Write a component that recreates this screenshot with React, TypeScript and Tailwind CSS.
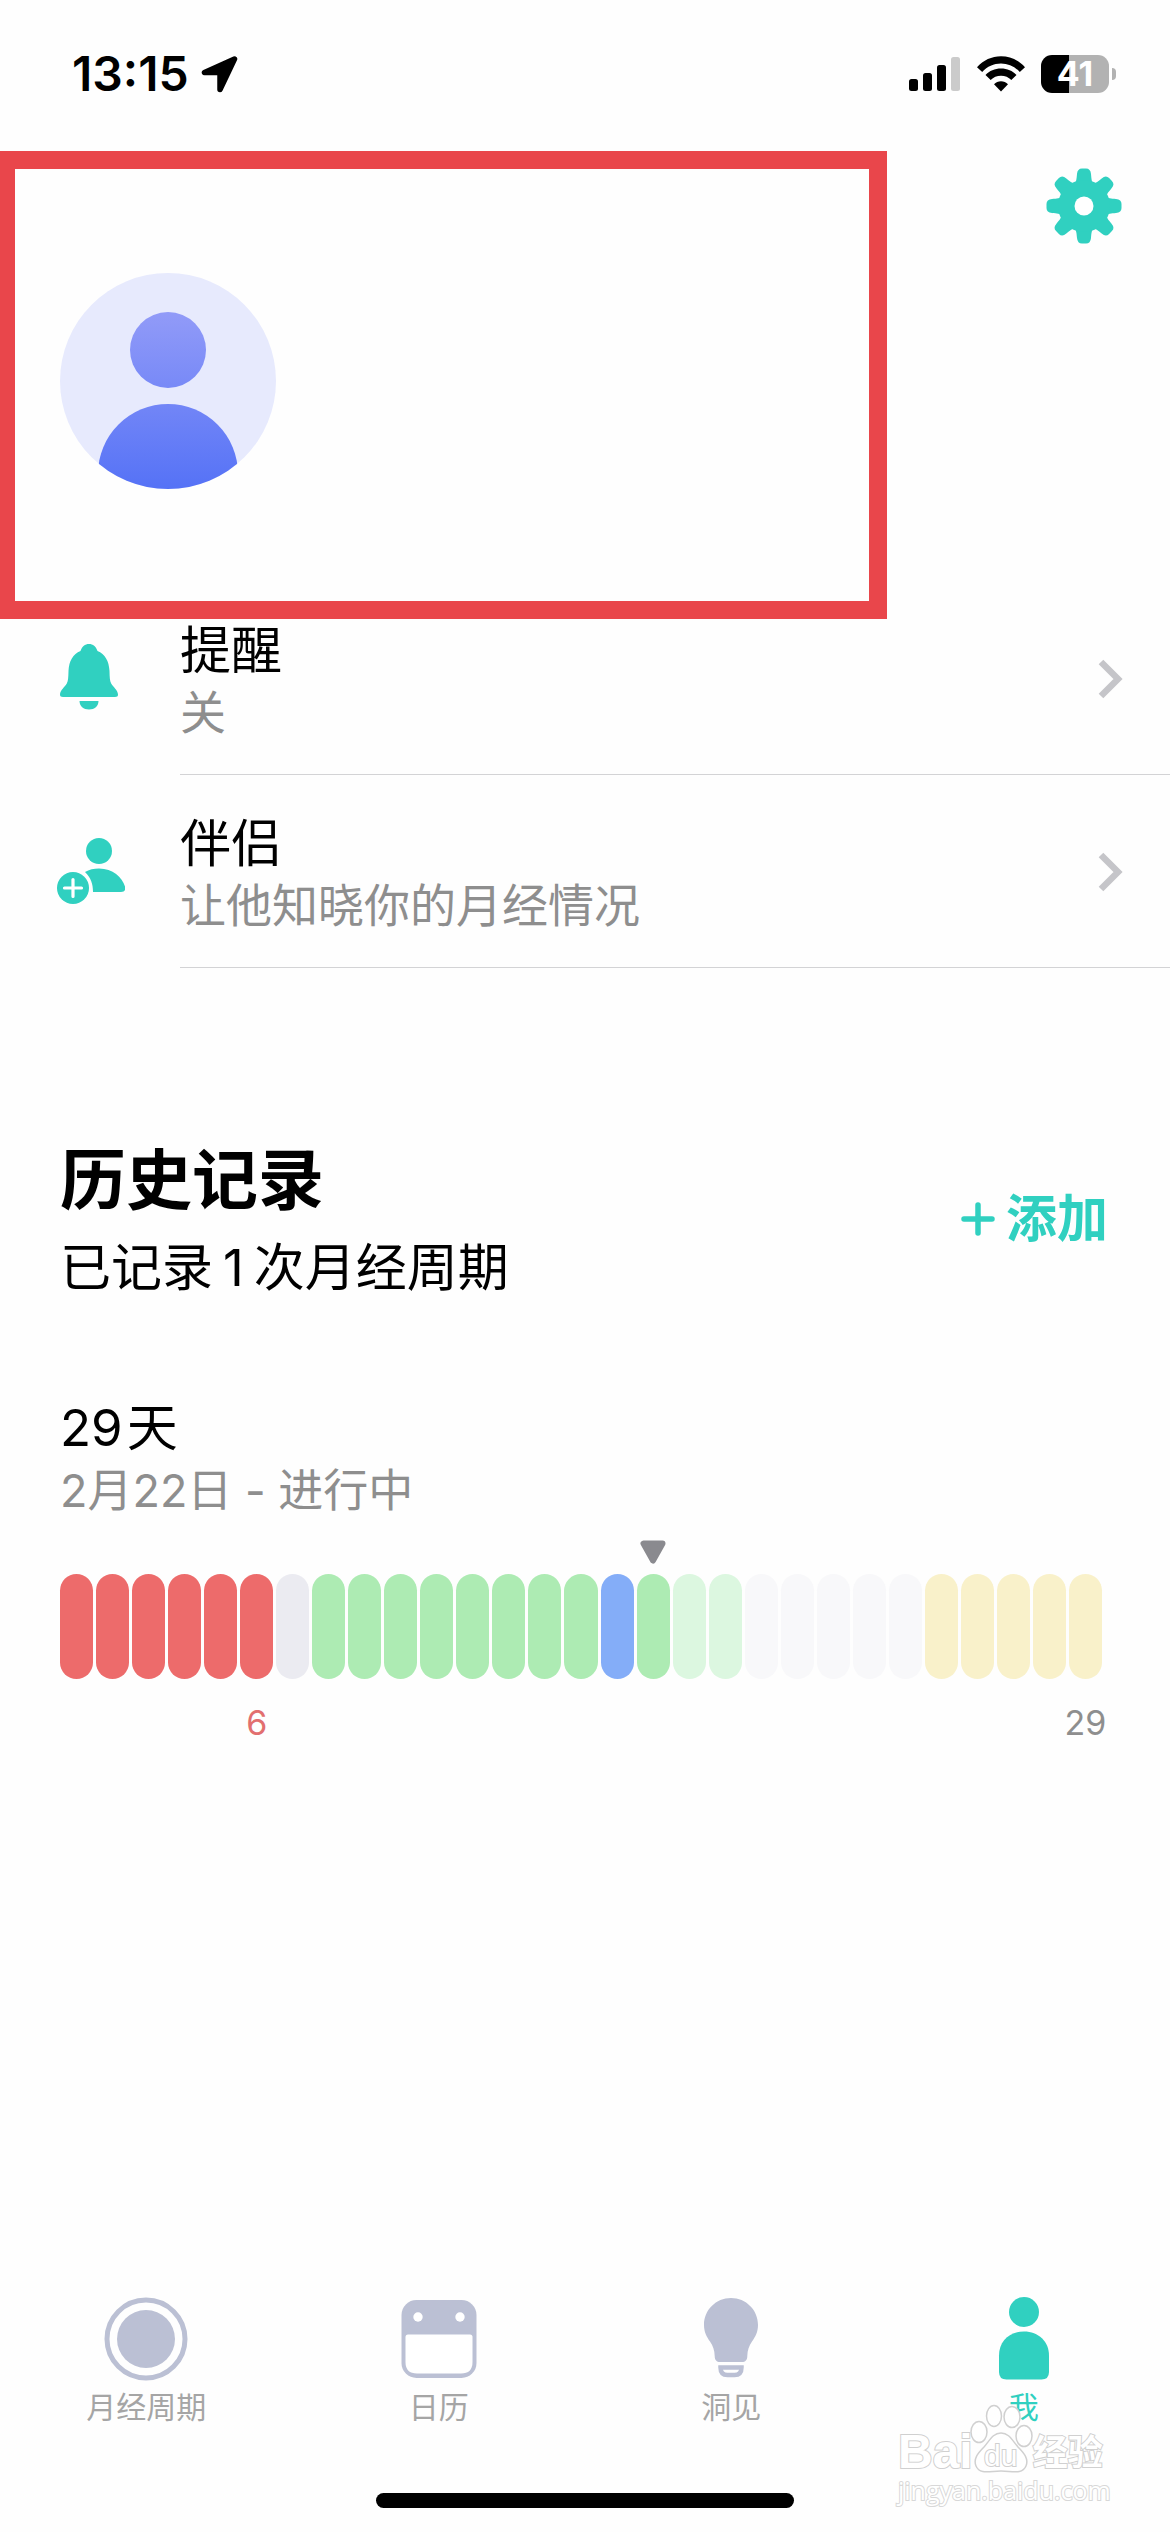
import React from 'react';

type DayKind = 'period' | 'neutral' | 'fertile' | 'ovulation' | 'fertileNext' | 'neutralNext' | 'pms';

const dayColors: Record<DayKind, string> = {
  period: 'bg-[#ed6b6b]',
  neutral: 'bg-[#ebebf1]',
  fertile: 'bg-[#adebb3]',
  ovulation: 'bg-[#84adf8]',
  fertileNext: 'bg-[#dcf7e0]',
  neutralNext: 'bg-[#f8f8fa]',
  pms: 'bg-[#f9f1ca]',
};

const repeat = (kind: DayKind, count: number): DayKind[] => Array(count).fill(kind);

const days: DayKind[] = [
  ...repeat('period', 6),
  ...repeat('neutral', 1),
  ...repeat('fertile', 8),
  ...repeat('ovulation', 1),
  ...repeat('fertile', 1),
  ...repeat('fertileNext', 2),
  ...repeat('neutralNext', 5),
  ...repeat('pms', 5),
];

const TODAY = 17;
const PERIOD_END = 6;

const StatusBar = () => (
  <div className="flex items-start justify-between pl-[72px] pr-[54px] pt-[46px] h-[151px]">
    <div className="flex items-center gap-3">
      <span className="text-[48px] leading-[56px] font-semibold">13:15</span>
      <svg width="37" height="37" viewBox="0 0 37 37">
        <path d="M33.500 3 3.500 16.500H19V33.500Z" fill="#000" stroke="#000" strokeWidth="5.500" strokeLinejoin="round" />
      </svg>
    </div>
    <div className="flex items-center h-[56px] gap-4">
      <svg width="52" height="36" viewBox="0 0 52 36">
        <rect x="0" y="23" width="9" height="12" rx="2.5" />
        <rect x="14" y="17" width="9" height="18" rx="2.5" />
        <rect x="28" y="9" width="9" height="26" rx="2.5" />
        <rect x="42" y="1" width="9" height="34" rx="2.5" fill="#cbcbcb" />
      </svg>
      <svg width="48" height="36" viewBox="0 0 48 36">
        <path d="M0 11.2C6.3 4.300 14.700.3 24 .3s17.700 4 24 10.900l-5.200 4.700C37.700 10.500 31.300 7.500 24 7.500S10.300 10.500 5.200 15.900z" />
        <path d="M8.500 19C12.500 14.800 17.800 12.500 24 12.500s11.500 2.300 15.500 6.500l-5.200 5c-2.700-2.900-6.200-4.300-10.300-4.300S16.400 21.100 13.700 24z" />
        <path d="M17 28.200c1.900-2 4.300-3 7-3s5.100 1 7 3L24 35.500z" />
      </svg>
      <div className="flex items-center gap-[3px]">
        <div className="w-[68px] h-[38px] rounded-[11px] bg-[linear-gradient(90deg,#000_41%,#b2b2b2_41%)] text-white text-[34px] leading-[38px] font-bold text-center">
          41
        </div>
        <div className="w-[4px] h-[12px] rounded-r-full bg-[#b2b2b2]" />
      </div>
    </div>
  </div>
);

const Avatar = () => (
  <svg width="216" height="216" viewBox="0 0 216 216">
    <defs>
      <linearGradient id="person" gradientUnits="userSpaceOnUse" x1="108" y1="38" x2="108" y2="216">
        <stop offset="0" stopColor="#929bf8" />
        <stop offset="1" stopColor="#5572f6" />
      </linearGradient>
      <clipPath id="disc">
        <circle cx="108" cy="108" r="108" />
      </clipPath>
    </defs>
    <circle cx="108" cy="108" r="108" fill="#e7eafd" />
    <g clipPath="url(#disc)" fill="url(#person)">
      <circle cx="108" cy="77" r="38" />
      <circle cx="108" cy="201" r="70" />
    </g>
  </svg>
);

const gearAngles = [0, 45, 90, 135, 180, 225, 270, 315];

const GearIcon = () => (
  <svg width="76" height="76" viewBox="-38 -38 76 76">
    <g fill="#30d0c0">
      {gearAngles.map((a) => (
        <path key={a} transform={`rotate(${a})`} d="M-10-22C-7.500-24-7.500-27-7-32Q-6.500-37.500-2-37.500H2Q6.500-37.500 7-32C7.500-27 7.500-24 10-22V-10H-10Z" />
      ))}
      <circle r="26" />
    </g>
    <circle r="9.500" fill="#fff" />
  </svg>
);

const BellIcon = () => (
  <svg width="64" height="70" viewBox="-3 0 64 70" fill="#30d0c0">
    <path d="M29 0c4 0 7 2.500 8.500 7C45 10 49 17 49.500 27c.2 6 .2 10 1.700 12.500C53 43 58 46 58 50.500c0 1.800-1 2.500-3 2.500H3c-2 0-3-.7-3-2.500C0 46 5 43 6.800 39.500 8.300 37 8.300 33 8.500 27 9 17 13 10 20.500 7 22 2.500 25 0 29 0z" />
    <path d="M19.500 57h19c0 5-4 8.500-9.500 8.500S19.500 62 19.500 57z" />
  </svg>
);

const PartnerIcon = () => (
  <svg width="68" height="70" viewBox="0 0 68 70" fill="#30d0c0">
    <circle cx="42" cy="14" r="13" />
    <path d="M28 35c4-2.500 9-3.500 14-3.500C56 31.500 65 40 68 49.500c1 3.500-.5 5.500-4 5.500H36c0-8-2-14-8-20z" />
    <circle cx="16" cy="51" r="16" />
    <path d="M16 42.500v17M7.500 51h17" stroke="#fff" strokeWidth="3.200" strokeLinecap="round" />
  </svg>
);

const Chevron = () => (
  <svg width="26" height="42" viewBox="0 0 26 42" fill="none" stroke="#c5c5c9" strokeWidth="6.500">
    <path d="M3 4 20 21 3 38" />
  </svg>
);

interface MenuRowProps {
  icon: React.ReactNode;
  title: string;
  detail: string;
  first?: boolean;
}

const MenuRow: React.FC<MenuRowProps> = ({ icon, title, detail, first }) => (
  <li>
    <button className="flex w-full text-left">
      <span className={`flex w-[180px] shrink-0 items-center pb-[36px] pl-[57px] ${first ? '' : 'pt-[37px]'}`}>{icon}</span>
      <span
        className={`flex flex-1 items-center justify-between border-b border-[#d3d3d5] pb-[35px] pr-[46px] ${
          first ? '' : 'pt-[37px]'
        }`}
      >
        <span>
          <span className="block text-[51px] leading-[64px]">{title}</span>
          <span className="mt-[2px] block text-[46px] leading-[54px] text-[#8e8e8e]">{detail}</span>
        </span>
        <Chevron />
      </span>
    </button>
  </li>
);

const CycleChart = () => (
  <div className="pt-[22px] pr-[8px]">
    <div className="grid gap-x-[3px] grid-cols-[repeat(29,minmax(0,1fr))]">
      {days.map((kind, i) => (
        <div key={i} className="flex flex-col items-center">
          <div className="h-[34px] flex items-start">
            {i + 1 === TODAY && (
              <svg width="26" height="24" viewBox="0 0 26 24">
                <path d="M3.500 3.500h19L13 20.500z" fill="#8a8a8f" stroke="#8a8a8f" strokeWidth="6" strokeLinejoin="round" />
              </svg>
            )}
          </div>
          <div className={`h-[105px] w-full rounded-full ${dayColors[kind]}`} />
          <div className="mt-[24px] text-[34px] leading-[40px]">
            {i + 1 === PERIOD_END && <span className="text-[#e26f6f]">{PERIOD_END}</span>}
            {i + 1 === days.length && <span className="text-[#8e8e8e]">{days.length}</span>}
          </div>
        </div>
      ))}
    </div>
  </div>
);

const CycleTabIcon = () => (
  <svg width="84" height="84" viewBox="0 0 84 84">
    <circle cx="42" cy="42" r="39" fill="none" stroke="#bbc0d4" strokeWidth="5" />
    <circle cx="42" cy="42" r="29" fill="#bbc0d4" />
  </svg>
);

const CalendarTabIcon = () => (
  <svg width="84" height="84" viewBox="0 0 84 84">
    <rect x="4.500" y="3" width="75" height="78" rx="15" fill="#bbc0d4" />
    <circle cx="21" cy="20" r="4.700" fill="#fff" />
    <circle cx="63" cy="20" r="4.700" fill="#fff" />
    <path d="M11 37.500h62q2.500 0 2.500 2.500v25q0 11.500-11.500 11.500H20q-11.500 0-11.500-11.500V40q0-2.500 2.500-2.500z" fill="#fff" />
  </svg>
);

const BulbTabIcon = () => (
  <svg width="84" height="84" viewBox="0 0 84 84">
    <path d="M42 1c15 0 27 12 27 27 0 7-2.500 11.500-6 16.500C60 49 58.500 53 58.300 59c0 4-2 6-5.300 6H31c-3.300 0-5.300-2-5.300-6-.2-6-1.700-10-4.700-14.500-3.500-5-6-9.500-6-16.500C15 13 27 1 42 1z" fill="#bbc0d4" />
    <path d="M31.500 70.500h21c0 5-2.500 7.500-7 7.500h-7c-4.500 0-7-2.500-7-7.500z" fill="#fff" stroke="#bbc0d4" strokeWidth="4.500" />
  </svg>
);

const MeTabIcon = () => (
  <svg width="84" height="84" viewBox="0 0 84 84" fill="#30d0c0">
    <circle cx="42" cy="15" r="15" />
    <path d="M42 34.500c14.500 0 25 10 25 24V75q0 7.500-7.500 7.500h-35Q17 82.500 17 75V58.500c0-14 10.500-24 25-24z" />
  </svg>
);

const tabs = [
  { label: '月经周期', icon: <CycleTabIcon />, color: 'text-[#a5a5a5]' },
  { label: '日历', icon: <CalendarTabIcon />, color: 'text-[#a5a5a5]' },
  { label: '洞见', icon: <BulbTabIcon />, color: 'text-[#a5a5a5]' },
  { label: '我', icon: <MeTabIcon />, color: 'text-[#30d0c0]' },
];

const Watermark = () => (
  <div className="pointer-events-none absolute bottom-[26px] right-[62px] flex w-[210px] flex-col text-white">
    <div className="flex items-end">
      <span className="font-['Liberation_Sans',sans-serif] text-[48px] leading-[44px] font-bold [-webkit-text-stroke:2px_#d0d0d0] [paint-order:stroke_fill]">
        Bai
      </span>
      <span className="relative -ml-1">
        <svg width="64" height="70" viewBox="0 0 64 70" fill="#fff" stroke="#d0d0d0" strokeWidth="1.500">
          <ellipse cx="10" cy="28" rx="8" ry="10.500" />
          <ellipse cx="25" cy="12" rx="7.500" ry="10.500" />
          <ellipse cx="43" cy="13" rx="8" ry="10.500" />
          <ellipse cx="55" cy="32" rx="8" ry="10.500" />
          <path d="M32 29c8 0 11 7 17 14 6 6 11 12 8 19-4 9-14 5-25 5S11 71 7 62c-3-7 2-13 8-19 6-7 9-14 17-14z" />
        </svg>
        <span className="absolute inset-x-0 bottom-0 text-center font-['Liberation_Sans',sans-serif] text-[30px] leading-[36px] [-webkit-text-stroke:2px_#d0d0d0] [paint-order:stroke_fill]">
          du
        </span>
      </span>
      <span className="text-[35px] leading-[44px] font-bold [-webkit-text-stroke:2px_#d0d0d0] [paint-order:stroke_fill]">经验</span>
    </div>
    <span className="font-['Open_Sans',sans-serif] text-[25px] leading-[32px] [-webkit-text-stroke:2px_#d8d8d8] [paint-order:stroke_fill]">
      jingyan.baidu.com
    </span>
  </div>
);

export default function App() {
  return (
    <div className="relative flex min-h-screen flex-col bg-[#fefefe] font-['Inter','Noto_Sans_CJK_SC',sans-serif] text-black">
      <StatusBar />

      <header className="flex items-start">
        <div className="flex-1 border-y-[18px] border-l-[15px] border-r-[18px] border-[#e9464b] pb-[112px] pl-[45px] pt-[104px]">
          <Avatar />
        </div>
        <div className="flex w-[283px] justify-end pr-[48px] pt-[17px]">
          <button aria-label="设置">
            <GearIcon />
          </button>
        </div>
      </header>

      <ul>
        <MenuRow icon={<BellIcon />} title="提醒" detail="关" first />
        <MenuRow icon={<PartnerIcon />} title="伴侣" detail="让他知晓你的月经情况" />
      </ul>

      <main className="px-[60px] pt-[172px]">
        <div className="flex items-center justify-between">
          <div>
            <h1 className="text-[66px] leading-[80px] font-semibold">历史记录</h1>
            <p className="mt-[18px] text-[51px] leading-[60px]">
              已记录<span className="mx-[10px]">1</span>次月经周期
            </p>
          </div>
          <button className="flex items-center gap-[10px] pr-[2px] text-[51px] leading-[60px] font-semibold text-[#30d0c0]">
            <svg width="36" height="36" viewBox="0 0 36 36" stroke="#30d0c0" strokeWidth="5.500" strokeLinecap="round">
              <path d="M18 4v28M4 18h28" />
            </svg>
            添加
          </button>
        </div>

        <section className="mt-[100px]">
          <h2 className="text-[51px] leading-[60px]">
            29<span className="ml-1">天</span>
          </h2>
          <p className="mt-[6px] text-[45px] leading-[54px] text-[#8e8e8e]">2月22日 - 进行中</p>
          <CycleChart />
        </section>
      </main>

      <nav className="mt-auto grid grid-cols-4">
        {tabs.map((tab) => (
          <button key={tab.label} className={`flex flex-col items-center text-[30px] leading-[40px] ${tab.color}`}>
            {tab.icon}
            <span className="mt-[6px]">{tab.label}</span>
          </button>
        ))}
      </nav>
      <div className="mx-auto mb-[24px] mt-[66px] h-[15px] w-[418px] rounded-full bg-black" />

      <Watermark />
    </div>
  );
}
